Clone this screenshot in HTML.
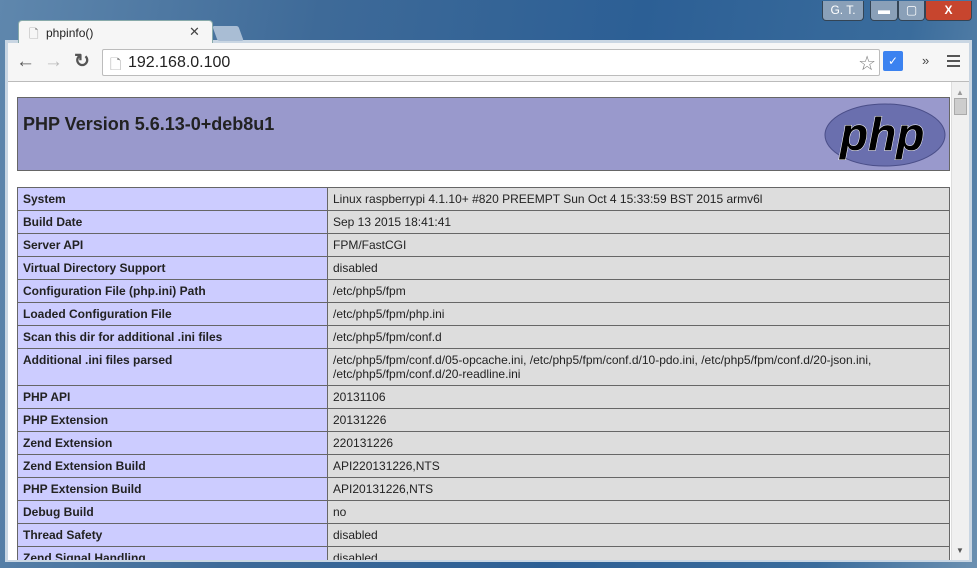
<!DOCTYPE html><html><head><style>
*{margin:0;padding:0;box-sizing:border-box}
body{width:977px;height:568px;overflow:hidden;background:#2a5a8c;font-family:"Liberation Sans",sans-serif;position:relative}
.bg{position:absolute;inset:0;background:linear-gradient(100deg,#5f87ad 0%,#3e6a98 30%,#2c5f95 60%,#3a6c9c 85%,#6a8fb0 100%)}
.tab{position:absolute;left:18px;top:20px;width:195px;height:24px;background:#f6f6f6;border-radius:4px 4px 0 0;border:1px solid #8aa;border-bottom:none}
.tab2{position:absolute;left:215px;top:26px;width:26px;height:15px;background:#a9bdd4;transform:skewX(20deg);border-radius:2px}
.tb{position:absolute;left:8px;top:43px;width:961px;height:39px;background:#f6f6f6;border-bottom:1px solid #bbb}
.url{position:absolute;left:102px;top:49px;width:778px;height:27px;background:#fff;border:1px solid #bcbcbc;border-radius:2px}
.content{position:absolute;left:8px;top:82px;width:961px;height:478px;background:#fff;overflow:hidden}
.sb{position:absolute;right:0;top:0;width:18px;height:478px;background:#f0f0f0;border-left:1px solid #ddd}
.hdr{position:absolute;left:9px;top:15px;width:933px;height:74px;background:#9999cc;border:1px solid #666}
.hdr h1{position:absolute;left:5px;top:16px;font-size:18px;font-weight:bold;color:#222}
.row{position:absolute;left:9px;width:933px;height:24px;border:1px solid #666;font-size:12px;color:#222}
.row .k{position:absolute;left:0;top:0;bottom:0;width:310px;background:#ccccff;border-right:1px solid #666;font-weight:bold;padding:4px 5px}
.row .v{position:absolute;left:310px;right:0;top:0;bottom:0;background:#ddd;padding:4px 5px;line-height:14px}
.btn{position:absolute;top:1px;height:20px;border:1px solid #345;border-top:none;border-radius:0 0 4px 4px;color:#fff;font-size:12px;text-align:center;line-height:18px}
</style></head><body>
<div class="bg"></div>
<div style="position:absolute;left:5px;top:40px;width:967px;height:522px;background:#c9d6e3"></div>
<div class="btn" style="left:822px;width:42px;background:#8aa0b8">G. T.</div>
<div class="btn" style="left:870px;width:28px;background:#8aa0b8">▬</div>
<div class="btn" style="left:898px;width:27px;background:#8aa0b8">▢</div>
<div class="btn" style="left:925px;width:47px;background:#c7452e;font-weight:bold">X</div>
<div class="tab"><span style="position:absolute;left:10px;top:4px;font-size:12px;color:#888">🗋</span><span style="position:absolute;left:27px;top:5px;font-size:12px;color:#222">phpinfo()</span><span style="position:absolute;left:170px;top:3px;font-size:13px;color:#444">✕</span></div>
<div class="tab2"></div>
<div class="tb">
<span style="position:absolute;left:8px;top:8px;font-size:19px;color:#555;font-weight:bold">←</span>
<span style="position:absolute;left:36px;top:8px;font-size:19px;color:#bbb;font-weight:bold">→</span>
<span style="position:absolute;left:66px;top:7px;font-size:19px;color:#555;font-weight:bold">↻</span>
<div style="position:absolute;left:875px;top:8px;width:20px;height:20px;background:#3b82f0;border-radius:2px;color:#fff;font-size:12px;text-align:center;line-height:20px">✓</div>
<span style="position:absolute;left:914px;top:10px;font-size:13px;color:#444">»</span>
<div style="position:absolute;left:939px;top:12px;width:13px;height:2px;background:#555;box-shadow:0 5px 0 #555,0 10px 0 #555"></div>
</div>
<div class="url"><span style="position:absolute;left:7px;top:4px;font-size:14px;color:#888">🗋</span><span style="position:absolute;left:25px;top:4px;font-size:16px;color:#222">192.168.0.100</span><span style="position:absolute;right:3px;top:1px;font-size:20px;color:#777">☆</span></div>
<div class="content">
<div class="hdr"><h1>PHP Version 5.6.13-0+deb8u1</h1>
<svg style="position:absolute;left:806px;top:5px" width="122" height="64"><ellipse cx="61" cy="32" rx="60" ry="31" fill="#6a6fae" stroke="#4a4e88"/><text x="16" y="47" font-family="Liberation Sans" font-style="italic" font-weight="bold" font-size="46" fill="#000" stroke="#fff" stroke-width="1" paint-order="stroke">php</text></svg></div>
<div class="row" style="top:105px"><div class="k">System</div><div class="v">Linux raspberrypi 4.1.10+ #820 PREEMPT Sun Oct 4 15:33:59 BST 2015 armv6l</div></div>
<div class="row" style="top:128px"><div class="k">Build Date</div><div class="v">Sep 13 2015 18:41:41</div></div>
<div class="row" style="top:151px"><div class="k">Server API</div><div class="v">FPM/FastCGI</div></div>
<div class="row" style="top:174px"><div class="k">Virtual Directory Support</div><div class="v">disabled</div></div>
<div class="row" style="top:197px"><div class="k">Configuration File (php.ini) Path</div><div class="v">/etc/php5/fpm</div></div>
<div class="row" style="top:220px"><div class="k">Loaded Configuration File</div><div class="v">/etc/php5/fpm/php.ini</div></div>
<div class="row" style="top:243px"><div class="k">Scan this dir for additional .ini files</div><div class="v">/etc/php5/fpm/conf.d</div></div>
<div class="row" style="top:266px;height:38px"><div class="k">Additional .ini files parsed</div><div class="v">/etc/php5/fpm/conf.d/05-opcache.ini, /etc/php5/fpm/conf.d/10-pdo.ini, /etc/php5/fpm/conf.d/20-json.ini, /etc/php5/fpm/conf.d/20-readline.ini</div></div>
<div class="row" style="top:303px"><div class="k">PHP API</div><div class="v">20131106</div></div>
<div class="row" style="top:326px"><div class="k">PHP Extension</div><div class="v">20131226</div></div>
<div class="row" style="top:349px"><div class="k">Zend Extension</div><div class="v">220131226</div></div>
<div class="row" style="top:372px"><div class="k">Zend Extension Build</div><div class="v">API220131226,NTS</div></div>
<div class="row" style="top:395px"><div class="k">PHP Extension Build</div><div class="v">API20131226,NTS</div></div>
<div class="row" style="top:418px"><div class="k">Debug Build</div><div class="v">no</div></div>
<div class="row" style="top:441px"><div class="k">Thread Safety</div><div class="v">disabled</div></div>
<div class="row" style="top:464px"><div class="k">Zend Signal Handling</div><div class="v">disabled</div></div>
<div class="sb"><div style="position:absolute;left:4px;top:6px;font-size:8px;color:#999">▲</div><div style="position:absolute;left:2px;top:16px;width:13px;height:17px;background:#cdcdcd;border:1px solid #aaa"></div><div style="position:absolute;left:4px;top:464px;font-size:8px;color:#555">▼</div></div>
</div>
</body></html>
